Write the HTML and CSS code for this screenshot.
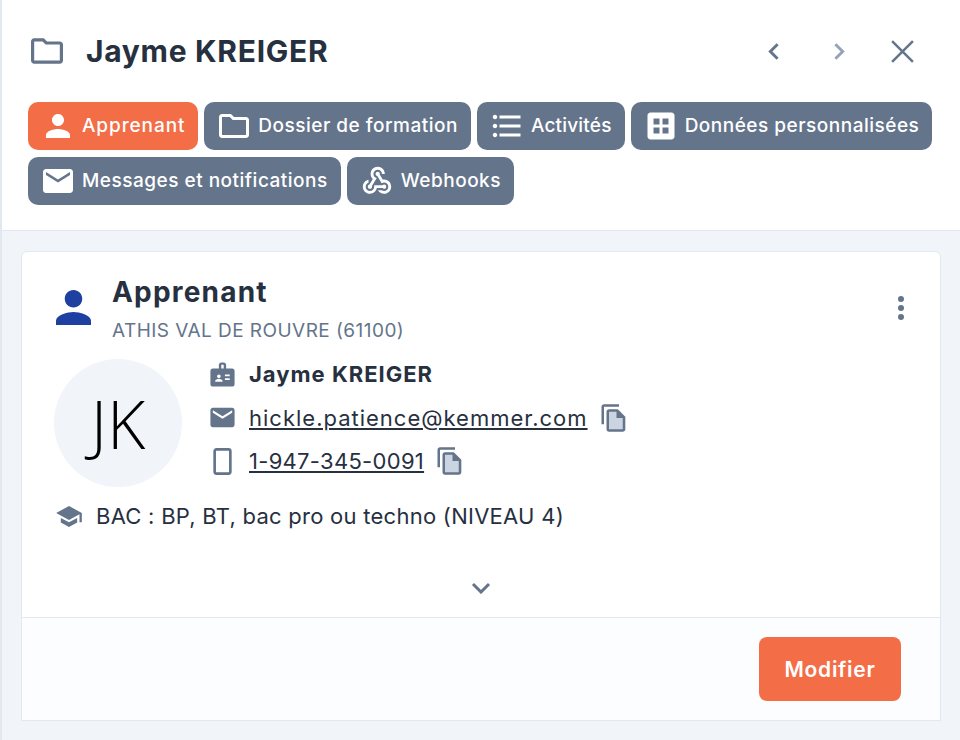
FILE: index.html
```html
<!DOCTYPE html>
<html lang="fr">
<head>
    <meta charset="UTF-8">
    <title>Jayme KREIGER</title>
    <link rel="stylesheet" href="styles.css">
</head>
<body>

<div class="panel">
    <header class="panel-head">
        <div class="title-row">
            <svg class="title-icon" viewBox="2 4 20 16"><path d="M9.17 6l2 2H20v10H4V6h5.17M10 4H4c-1.1 0-1.99.9-1.99 2L2 18c0 1.1.9 2 2 2h16c1.1 0 2-.9 2-2V8c0-1.1-.9-2-2-2h-8l-2-2z"/></svg>
            <h1>Jayme KREIGER</h1>
            <div class="nav-icons">
                <svg class="nav-icon" viewBox="0 0 24 24"><path d="M15 5l-7 7 7 7"/></svg>
                <svg class="nav-icon dim" viewBox="0 0 24 24"><path d="M9 5l7 7-7 7"/></svg>
                <svg class="nav-icon close" viewBox="0 0 24 24"><path d="M2 2l20 20M22 2L2 22"/></svg>
            </div>
        </div>
        <nav class="tabs">
            <a class="tab active"><svg class="tab-icon" viewBox="0 0 24 24"><path d="M12 12c2.21 0 4-1.79 4-4s-1.79-4-4-4-4 1.79-4 4 1.79 4 4 4zm0 2c-2.67 0-8 1.34-8 4v2h16v-2c0-2.66-5.33-4-8-4z"/></svg>Apprenant</a>
            <a class="tab"><svg class="tab-icon" viewBox="0 0 24 24"><path d="M9.17 6l2 2H20v10H4V6h5.17M10 4H4c-1.1 0-1.99.9-1.99 2L2 18c0 1.1.9 2 2 2h16c1.1 0 2-.9 2-2V8c0-1.1-.9-2-2-2h-8l-2-2z"/></svg>Dossier de formation</a>
            <a class="tab tab-short"><svg class="tab-icon" viewBox="0 0 24 24"><path d="M4 10.5c-.83 0-1.5.67-1.5 1.5s.67 1.5 1.5 1.5 1.5-.67 1.5-1.5-.67-1.5-1.5-1.5zm0-6c-.83 0-1.5.67-1.5 1.5S3.17 7.5 4 7.5 5.5 6.83 5.5 6 4.83 4.5 4 4.5zm0 12c-.83 0-1.5.68-1.5 1.5s.68 1.5 1.5 1.5 1.5-.68 1.5-1.5-.67-1.5-1.5-1.5zM7 19h14v-2H7v2zm0-6h14v-2H7v2zm0-8v2h14V5H7z"/></svg>Activités</a>
            <a class="tab"><svg class="tab-icon" viewBox="0 0 24 24"><path fill-rule="evenodd" d="M5 3h14c1.1 0 2 .9 2 2v14c0 1.1-.9 2-2 2H5c-1.1 0-2-.9-2-2V5c0-1.100.9-2 2-2zm2 4v4h4V7H7zm6 0v4h4V7h-4zm-6 6v4h4v-4H7zm6 0v4h4v-4h-4z"/></svg>Données personnalisées</a>
            <a class="tab"><svg class="tab-icon" viewBox="0 0 24 24"><path d="M20 4H4c-1.1 0-1.99.9-1.99 2L2 18c0 1.1.9 2 2 2h16c1.1 0 2-.9 2-2V6c0-1.1-.9-2-2-2zm0 4l-8 5-8-5V6l8 5 8-5v2z"/></svg>Messages et notifications</a>
            <a class="tab"><svg class="tab-icon hook" viewBox="0 0 24 24"><path d="M10 15h5.880c.27-.31.67-.5 1.120-.5.83 0 1.500.67 1.500 1.500s-.67 1.500-1.500 1.500c-.44 0-.84-.19-1.120-.5H11.900c-.46 2.280-2.480 4-4.900 4-2.760 0-5-2.240-5-5 0-2.420 1.720-4.440 4-4.900v2.070c-1.160.41-2 1.530-2 2.830 0 1.650 1.350 3 3 3s3-1.350 3-3v-1zm2.500-11c1.650 0 3 1.350 3 3h2c0-2.760-2.240-5-5-5s-5 2.240-5 5c0 1.430.6 2.710 1.550 3.620l-2.350 3.900c-.68.14-1.200.75-1.200 1.480 0 .83.67 1.500 1.500 1.500s1.500-.67 1.500-1.500c0-.16-.02-.31-.07-.45l3.380-5.630C10.490 9.610 9.500 8.420 9.500 7c0-1.650 1.350-3 3-3zm4.500 9c-.64 0-1.230.2-1.720.54l-3.050-5.070C11.530 8.350 11 7.740 11 7c0-.83.67-1.500 1.500-1.500S14 6.170 14 7c0 .15-.02.29-.06.43l2.190 3.650c.28-.05.57-.08.87-.08 2.760 0 5 2.240 5 5s-2.240 5-5 5c-1.850 0-3.470-1.010-4.330-2.500h2.670c.48.32 1.050.5 1.660.5 1.650 0 3-1.350 3-3s-1.350-3-3-3z"/></svg>Webhooks</a>
        </nav>
    </header>

    <main class="panel-body">
        <section class="card">
            <div class="card-main">
                <div class="card-head">
                    <svg class="card-head-icon" viewBox="4 4 16 16"><path d="M12 12c2.210 0 4-1.790 4-4s-1.790-4-4-4-4 1.790-4 4 1.790 4 4 4zm0 2c-2.670 0-8 1.340-8 4v2h16v-2c0-2.660-5.330-4-8-4z"/></svg>
                    <div class="card-titles">
                        <h2>Apprenant</h2>
                        <p class="subtitle">ATHIS VAL DE ROUVRE (61100)</p>
                    </div>
                    <svg class="more" viewBox="0 0 8 26"><circle cx="4" cy="4" r="3"/><circle cx="4" cy="13" r="3"/><circle cx="4" cy="22" r="3"/></svg>
                </div>
                <div class="identity">
                    <div class="avatar">JK</div>
                    <ul class="contact">
                        <li class="contact-name">
                            <svg class="contact-icon" viewBox="0 0 24 24"><path d="M20 7h-5V4c0-1.100-.9-2-2-2h-2c-1.100 0-2 .9-2 2v3H4c-1.100 0-2 .9-2 2v11c0 1.100.9 2 2 2h16c1.100 0 2-.9 2-2V9c0-1.100-.9-2-2-2zM9 12c.83 0 1.500.67 1.500 1.500S9.830 15 9 15s-1.500-.67-1.500-1.500S8.170 12 9 12zm3 6H6v-.75c0-1 2-1.500 3-1.500s3 .5 3 1.500V18zm1-11h-2V4h2v3zm5 9.500h-4V15h4v1.500zm0-3h-4V12h4v1.500z"/></svg>
                            <strong>Jayme KREIGER</strong>
                        </li>
                        <li>
                            <svg class="contact-icon" viewBox="0 0 24 24"><path d="M20 4H4c-1.100 0-1.990.9-1.990 2L2 18c0 1.100.9 2 2 2h16c1.100 0 2-.9 2-2V6c0-1.100-.9-2-2-2zm0 4l-8 5-8-5V6l8 5 8-5v2z"/></svg>
                            <a class="contact-link">hickle.patience@kemmer.com</a>
                            <svg class="copy" viewBox="0 0 24 24"><path class="copy-fill" d="M8 6h8l5 5v11H8z"/><path d="M16 1H4c-1.100 0-2 .9-2 2v14h2V3h12V1zm-1 4H8c-1.100 0-1.990.9-1.990 2L6 21c0 1.100.89 2 1.990 2H19c1.100 0 2-.9 2-2V11l-6-6zM8 21V7h6v5h5v9H8z"/></svg>
                        </li>
                        <li>
                            <svg class="contact-icon phone" viewBox="0 0 24 24"><rect x="5.500" y="2" width="13" height="20" rx="1.500"/></svg>
                            <a class="contact-link contact-phone">1-947-345-0091</a>
                            <svg class="copy" viewBox="0 0 24 24"><path class="copy-fill" d="M8 6h8l5 5v11H8z"/><path d="M16 1H4c-1.100 0-2 .9-2 2v14h2V3h12V1zm-1 4H8c-1.100 0-1.990.9-1.990 2L6 21c0 1.100.89 2 1.990 2H19c1.100 0 2-.9 2-2V11l-6-6zM8 21V7h6v5h5v9H8z"/></svg>
                        </li>
                    </ul>
                </div>
                <p class="level">
                    <svg class="level-icon" viewBox="1 3 22 18"><path d="M5 13.180v4L12 21l7-3.820v-4L12 17l-7-3.820zM12 3L1 9l11 6 9-4.910V17h2V9L12 3z"/></svg>
                    BAC : BP, BT, bac pro ou techno (NIVEAU 4)
                </p>
                <div class="expand">
                    <svg viewBox="0 0 20 12"><path d="M2 2l8 8 8-8"/></svg>
                </div>
            </div>
            <footer class="card-foot">
                <button class="btn-primary">Modifier</button>
            </footer>
        </section>
    </main>
</div>

</body>
</html>
```

FILE: styles.css
```css
html, body {
    margin: 0;
    height: 100%;
}
body {
    font-family: Inter, "Liberation Sans", sans-serif;
    color: #27303f;
    background-color: #f1f5f9;
}
h1, h2, p, ul {
    margin: 0;
    padding: 0;
}
.panel {
    min-height: 740px;
    box-sizing: border-box;
    border-left: 2px solid #e2e8f0;
    background-color: #f1f5fa;
}
.panel-head {
    height: 231px;
    box-sizing: border-box;
    padding: 30px 26px 0 26px;
    background-color: #fff;
    border-bottom: 1px solid #e2e8f0;
}
.title-row {
    display: flex;
    align-items: center;
    height: 42px;
}
.title-icon {
    width: 32px;
    height: 26px;
    margin-left: 3px;
    fill: #64748b;
}
h1 {
    margin-left: 23px;
    font-size: 30px;
    font-weight: 700;
    letter-spacing: 0.7px;
}
.nav-icons {
    margin-left: auto;
    margin-right: 19px;
    display: flex;
    align-items: center;
    gap: 39px;
}
.nav-icon {
    width: 25px;
    height: 25px;
    fill: none;
    stroke: #64748b;
    stroke-width: 2.8;
}
.nav-icon.dim {
    stroke: #94a3b8;
}
.nav-icon.close {
    stroke-width: 2.400;
}
.tabs {
    margin-top: 30px;
    display: flex;
    flex-wrap: wrap;
    gap: 7px 6px;
}
.tab {
    height: 48px;
    box-sizing: border-box;
    display: flex;
    align-items: center;
    gap: 6px;
    padding: 0 13px 1px 12px;
    border-radius: 10px;
    background-color: #64748b;
    color: #fff;
    font-size: 19px;
    font-weight: 500;
    letter-spacing: 0.5px;
}
.tab.active {
    background-color: #f36d46;
    letter-spacing: 0.9px;
}
.tab.tab-short {
    letter-spacing: 0.2px;
}
.tab-icon {
    width: 36px;
    height: 36px;
    fill: #fff;
}
.tab-icon.hook {
    width: 34px;
    height: 34px;
    margin: 0 1px;
}
.panel-body {
    padding: 20px 19px 0 19px;
}
.card {
    background-color: #fff;
    border: 1px solid #e2e8f0;
    border-radius: 6px 6px 0 0;
}
.card-main {
    height: 365px;
    box-sizing: border-box;
    padding: 20px 32px 0 32px;
}
.card-head {
    display: flex;
    align-items: center;
}
.card-head-icon {
    width: 35px;
    height: 35px;
    margin: 0 0 4px 2px;
    fill: #1e40a0;
}
.card-titles {
    margin-left: 21px;
}
h2 {
    font-size: 28px;
    font-weight: 700;
    line-height: 40px;
    letter-spacing: 1.2px;
}
.subtitle {
    margin-top: 3px;
    font-size: 19px;
    line-height: 32px;
    letter-spacing: 0.45px;
    color: #64748b;
}
.more {
    margin: 0 3px 3px auto;
    width: 8px;
    height: 26px;
    fill: #64748b;
}
.identity {
    margin-top: 12px;
    display: flex;
}
.avatar {
    width: 128px;
    height: 128px;
    border-radius: 50%;
    background-color: #f1f5f9;
    display: flex;
    align-items: center;
    justify-content: center;
    color: #000;
    font-family: "Open Sans", sans-serif;
    font-size: 66px;
    font-weight: 300;
}
.contact {
    margin-left: 26px;
    list-style: none;
    display: flex;
    flex-direction: column;
    gap: 13.5px;
}
.contact li {
    display: flex;
    align-items: center;
    height: 30px;
    font-size: 22px;
    letter-spacing: 1px;
}
.contact-icon {
    width: 29px;
    height: 29px;
    margin-right: 12px;
    fill: #64748b;
}
.contact-icon.phone {
    fill: none;
    stroke: #64748b;
    stroke-width: 2.200;
}
.contact-name {
    letter-spacing: 0.6px;
}
.contact-link {
    text-decoration: underline;
}
.contact-phone {
    letter-spacing: 0.3px;
}
.copy {
    width: 30px;
    height: 30px;
    margin-left: 11px;
    fill: #64748b;
}
.copy-fill {
    fill: #cbd5e1;
}
.level {
    margin: 13px 0 0 2px;
    display: flex;
    align-items: center;
    gap: 14px;
    font-size: 22px;
    letter-spacing: 0.26px;
    line-height: 32px;
}
.level-icon {
    width: 26px;
    height: 21px;
    fill: #64748b;
}
.expand {
    margin-top: 46px;
    text-align: center;
}
.expand svg {
    width: 20px;
    height: 12px;
    fill: none;
    stroke: #64748b;
    stroke-width: 3;
}
.card-foot {
    height: 103px;
    box-sizing: border-box;
    padding: 19px 39px 0 0;
    display: flex;
    justify-content: flex-end;
    align-items: flex-start;
    background-color: #fcfdfe;
    border-top: 1px solid #e2e8f0;
}
.btn-primary {
    width: 142px;
    height: 64px;
    border: none;
    border-radius: 8px;
    background-color: #f36d46;
    color: #fff;
    font-family: Inter, "Liberation Sans", sans-serif;
    font-size: 21px;
    font-weight: 600;
    letter-spacing: 0.7px;
}
```
